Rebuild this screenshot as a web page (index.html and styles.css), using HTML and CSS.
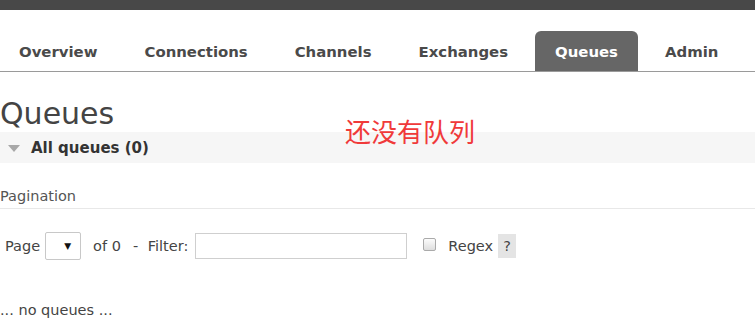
FILE: index.html
```html
<!DOCTYPE html>
<html>
<head>
<meta charset="utf-8">
<link rel="stylesheet" href="styles.css">
</head>
<body>
<div class="topbar"></div>
<nav class="menu">
  <ul class="tabs">
    <li class="tab first"><a>Overview</a></li>
    <li class="tab"><a>Connections</a></li>
    <li class="tab"><a>Channels</a></li>
    <li class="tab"><a>Exchanges</a></li>
    <li class="tab active"><a>Queues</a></li>
    <li class="tab"><a>Admin</a></li>
  </ul>
</nav>
<main class="main">
  <h1 class="title">Queues</h1>
  <div class="note">还没有队列</div>
  <div class="section-head"><span class="tri"></span><span class="section-title">All queues (0)</span></div>
  <div class="pag-head">Pagination</div>
  <div class="controls">
    <span class="lbl">Page</span>
    <span class="sel"><span class="arrow">▼</span></span>
    <span class="lbl of">of 0</span>
    <span class="lbl filter">- Filter:</span>
    <span class="input"></span>
    <span class="check"></span>
    <span class="lbl regex">Regex</span>
    <span class="help">?</span>
  </div>
  <div class="empty">... no queues ...</div>
</main>
</body>
</html>
```
FILE: styles.css
```css
html, body {
  margin: 0;
  padding: 0;
  background: #fff;
}
body {
  font-family: "DejaVu Sans", Verdana, sans-serif;
  color: #484848;
  width: 755px;
  height: 318px;
  overflow: hidden;
  position: relative;
}
.topbar {
  height: 10px;
  background: #484848;
}
.menu {
  padding-top: 21px;
  border-bottom: 1px solid #9a9a9a;
}
.tabs {
  list-style: none;
  margin: 0 0 0 -1px;
  padding: 0;
  display: flex;
  gap: 7px;
}
.tab a {
  display: block;
  padding: 12px 20px 10px;
  line-height: 18px;
  font-size: 14.9px;
  font-weight: bold;
  color: #4a4a4a;
  border-radius: 6px 6px 0 0;
}
.tab.active a {
  background: #666;
  color: #fff;
}
.main {
  position: relative;
  padding-top: 1px;
}
.title {
  margin: 24px 0 0 0;
  font-size: 30px;
  line-height: 34px;
  font-weight: normal;
  color: #444;
  height: 35px;
}
.note {
  position: absolute;
  left: 345px;
  top: 44px;
  font-family: "Noto Sans CJK SC", sans-serif;
  font-size: 26px;
  line-height: 30px;
  color: #f03a3a;
}
.section-head {
  height: 31px;
  background: #f6f6f6;
  display: flex;
  align-items: center;
}
.tri {
  width: 0;
  height: 0;
  border-left: 6px solid transparent;
  border-right: 6px solid transparent;
  border-top: 7px solid #a8a8a8;
  margin: 2px 11px 0 8px;
}
.section-title {
  font-size: 15px;
  font-weight: bold;
  color: #333;
}
.pag-head {
  margin-top: 24px;
  font-size: 14.5px;
  line-height: 18px;
  padding-bottom: 3px;
  border-bottom: 1px solid #e8e8e8;
  color: #555;
}
.controls {
  margin-top: 23px;
  display: flex;
  align-items: center;
  height: 28px;
  font-size: 14.5px;
  color: #444;
}
.lbl { line-height: 18px; }
.controls > .lbl:first-child { margin-left: 5px; }
.sel {
  box-sizing: border-box;
  width: 36px;
  height: 28px;
  margin-left: 5px;
  border: 1px solid #c8c8c8;
  border-radius: 2px;
  display: flex;
  align-items: center;
  justify-content: flex-end;
  padding-right: 9px;
}
.arrow {
  font-size: 9px;
  color: #111;
}
.of { margin-left: 12px; }
.filter { margin-left: 12px; word-spacing: 5px; }
.input {
  box-sizing: border-box;
  width: 212px;
  height: 26px;
  margin-left: 7px;
  border: 1px solid #cfcfcf;
}
.check {
  box-sizing: border-box;
  width: 13px;
  height: 13px;
  margin-left: 16px;
  margin-top: -4px;
  border: 1px solid #aaa;
  border-radius: 2px;
  background: linear-gradient(#fcfcfc, #dedede);
}
.regex { margin-left: 12px; }
.help {
  margin-left: 5px;
  width: 18px;
  height: 24px;
  background: #e4e4e4;
  display: flex;
  align-items: center;
  justify-content: center;
  color: #444;
}
.empty {
  margin-top: 41px;
  font-size: 14.5px;
  line-height: 18px;
  color: #444;
}
```
